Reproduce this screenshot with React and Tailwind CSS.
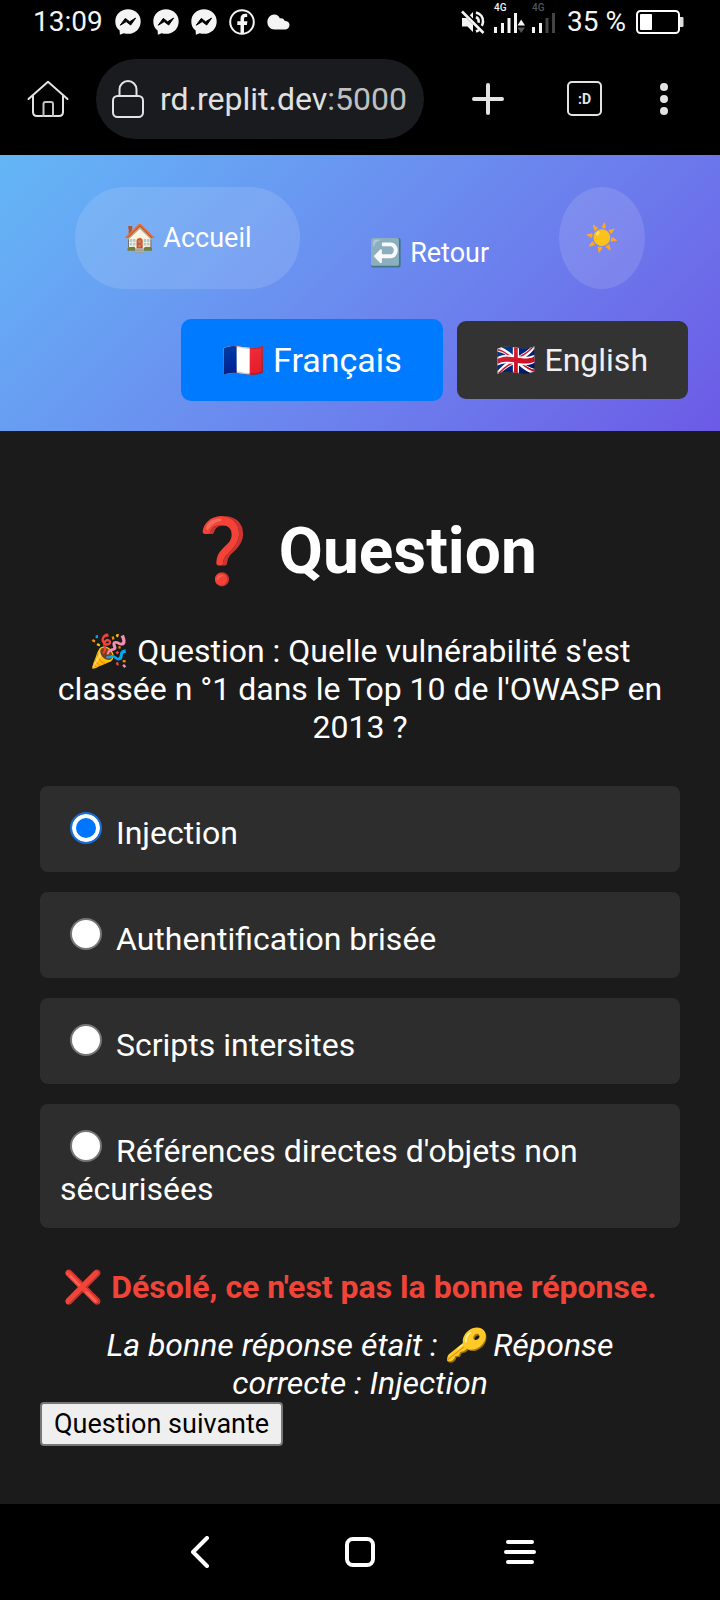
import { useState } from "react";

function MessengerIcon() {
  return (
    <svg className="size-[26px]" viewBox="0 0 26 26" aria-hidden="true">
      <path d="M13 0.2C5.8 0.2 0.3 5.4 0.3 12.4c0 3.8 1.5 6.900 4.300 9.200l0.300 4.200 3.800-1.600c1.300 0.400 2.800 0.600 4.300 0.600 7.200 0 12.700-5.200 12.700-12.400S20.200 0.200 13 0.200z" fill="#f4f4f4" />
      <path d="M5.300 16.200l5-6.800 4.300 3.400 6-3.700-4.900 6.900-4.500-3.400z" fill="#000" stroke="#000" strokeWidth="1" strokeLinejoin="round" />
    </svg>
  );
}

function FacebookIcon() {
  return (
    <svg className="size-[26px]" viewBox="0 0 26 26" fill="none" aria-hidden="true">
      <circle cx="13" cy="13" r="11.800" stroke="#f4f4f4" strokeWidth="2" />
      <path d="M11.500 24.500v-8.500H8.300v-3.700h3.200V9.800c0-3.200 1.900-5 4.800-5 1 0 1.900 0.200 1.900 0.200v3.100h-1.500c-1.400 0-1.700 0.900-1.700 1.800v2.400h3.400l-0.500 3.700H15v8.500z" fill="#f4f4f4" />
    </svg>
  );
}

function CloudIcon() {
  return (
    <svg className="h-4 w-[23px]" viewBox="0 0 23 16" aria-hidden="true">
      <path d="M7 0.500C9.500 0.300 11.800 1.700 13 4.400c2.300-0.300 3.800 0.500 4.600 2.400C20.700 6.900 22.500 8.700 22.500 11c0 2.700-1.900 4.500-4.700 4.500H7.500C3.300 15.500 0.400 12.300 0.400 8.300 0.400 4 2.900 0.800 7 0.500z" fill="#f4f4f4" />
    </svg>
  );
}

function MuteIcon() {
  return (
    <svg className="size-6" viewBox="0 0 24 24" fill="none" aria-hidden="true">
      <path d="M1 8h4.500L12 14.500V22l-5.500-5.500H1z" fill="#f4f4f4" />
      <path d="M12 2v6.500L8.800 5.200z" fill="#f4f4f4" />
      <path d="M15 7c2 1 3 3 2.600 5.800M15 2.400c4.800 1.300 7.300 5.300 7 9.300-0.100 1.700-0.500 3-1.200 4.200M15 21.500l3-1.400" stroke="#f4f4f4" strokeWidth="2.600" />
      <path d="M1 1.500l21.500 21.500" stroke="#f4f4f4" strokeWidth="2.600" />
    </svg>
  );
}

function Signal({ arrows }) {
  const faint = arrows ? "#f4f4f4" : "#444";
  return (
    <div className="flex flex-col">
      <span className={`h-[10px] text-[10px] leading-[10px] font-medium ${arrows ? "text-[#f4f4f4]" : "text-[#555]"}`}>4G</span>
      <svg className="h-5 w-[31px]" viewBox="0 0 31 20" aria-hidden="true">
        <path d="M0 14h3v6H0zM7 10h3v10H7z" fill="#f4f4f4" />
        <path d="M13.500 5h3v15h-3zM20 0h3v20H20z" fill={faint} />
        {arrows && <path d="M23.500 12.500h7.500L27.200 6.500z" fill="#f4f4f4" />}
        {arrows && <path d="M23.500 14.500h7.500L27.200 20z" fill="#555" />}
      </svg>
    </div>
  );
}

function BatteryIcon() {
  return (
    <svg className="h-6 w-12" viewBox="0 0 48 24" fill="none" aria-hidden="true">
      <rect x="1" y="1" width="42" height="22" rx="3.500" stroke="#fff" strokeWidth="2" />
      <rect x="4" y="4" width="12" height="16" rx="1" fill="#fff" />
      <path d="M44 7h2.500q1 0 1 1v8q0 1-1 1H44z" fill="#ddd" />
    </svg>
  );
}

function StatusBar() {
  return (
    <div className="flex h-11 items-center justify-between pr-9 pl-[33px] text-[28px] leading-8 text-[#f4f4f4]">
      <div className="flex items-center gap-3">
        <span>13:09</span>
        <MessengerIcon />
        <MessengerIcon />
        <MessengerIcon />
        <FacebookIcon />
        <CloudIcon />
      </div>
      <div className="flex items-center">
        <MuteIcon />
        <div className="flex gap-[7px] pr-1 pb-2 pl-[9px]">
          <Signal arrows />
          <Signal />
        </div>
        <span className="pr-[10px]">35 %</span>
        <BatteryIcon />
      </div>
    </div>
  );
}

function BrowserBar() {
  return (
    <div className="flex h-[111px] items-center pr-[52px] pb-0.5 pl-[27px]">
      <button type="button" aria-label="Home">
        <svg className="h-[38px] w-[42px]" viewBox="0 0 42 38" fill="none" stroke="#e3e3e3" strokeWidth="2" strokeLinejoin="round" strokeLinecap="round" aria-hidden="true">
          <path d="M1.500 19L21 1.800 40.500 19M6 15.500V32q0 4 4 4h22q4 0 4-4V15.500" />
          <path d="M16.500 36V24q0-2 2-2H24q2 0 2 2v12" stroke="#c4c4c4" />
        </svg>
      </button>
      <button type="button" aria-label="Address" className="ml-[27px] flex h-20 flex-1 items-center rounded-full bg-[#1a1b1f] pl-4 text-[32px] leading-10 text-[#e1e1e1]">
        <svg className="mr-4 h-[38px] w-8" viewBox="0 0 32 38" fill="none" stroke="#e3e3e3" strokeWidth="2" aria-hidden="true">
          <rect x="1" y="16" width="30" height="21" rx="4.500" />
          <path d="M7.500 16v-6.500a8.500 8.500 0 0 1 17 0V16" />
        </svg>
        <span>rd.replit.dev</span>
        <span className="text-[#c0c0c0]">:5000</span>
      </button>
      <button type="button" aria-label="New tab" className="ml-12">
        <svg className="size-8" viewBox="0 0 32 32" stroke="#e3e3e3" strokeWidth="4" strokeLinecap="round" aria-hidden="true">
          <path d="M16 2v28M2 16h28" />
        </svg>
      </button>
      <button type="button" aria-label="Tabs" className="ml-[63px] flex size-[35px] items-center justify-center rounded-[5px] border-2 border-[#e3e3e3] text-[14px] leading-5 font-bold text-[#e3e3e3]">
        :D
      </button>
      <button type="button" aria-label="Menu" className="ml-[58px]">
        <svg className="h-8 w-2" viewBox="0 0 8 32" fill="#e3e3e3" aria-hidden="true">
          <circle cx="4" cy="4" r="4" />
          <circle cx="4" cy="16" r="4" />
          <circle cx="4" cy="28" r="4" />
        </svg>
      </button>
    </div>
  );
}

function SiteHeader() {
  return (
    <header className="flex flex-col gap-[30px] bg-linear-135 from-[#63b6f6] to-[#6c5ae6] px-8 pt-8 pb-[30px] text-white">
      <nav className="flex items-center justify-between px-[43px] text-[27px] leading-[30px]">
        <a href="#accueil" className="rounded-[50px] bg-white/12 px-12 py-9">🏠 Accueil</a>
        <a href="#retour" className="pt-[30px]">↩️ Retour</a>
        <button type="button" aria-label="Theme" className="rounded-[50%] bg-white/12 px-[26px] py-9">☀️</button>
      </nav>
      <div className="flex items-center justify-end gap-[14px]">
        <button type="button" className="rounded-[10px] bg-[#007bff] px-[41px] py-[21px] text-[34px] leading-10">🇫🇷 Français</button>
        <button type="button" className="rounded-[9px] bg-[#333] px-10 py-5 text-[32px] leading-[38px] text-[#f0f0f0]">🇬🇧 English</button>
      </div>
    </header>
  );
}

const answers = [
  "Injection",
  "Authentification brisée",
  "Scripts intersites",
  "Références directes d'objets non sécurisées",
];

function Quiz() {
  const [choice, setChoice] = useState(0);
  return (
    <main className="flex-1 bg-[#1b1b1b] px-10 pt-[83px] pb-[57px] text-[32px] leading-[38px] text-white">
      <h1 className="text-center text-[64px] leading-[76px] font-bold">❓ Question</h1>
      <p className="mt-[42px] text-center">🎉 Question : Quelle vulnérabilité s'est classée n °1 dans le Top 10 de l'OWASP en 2013 ?</p>
      <div className="mt-10 flex flex-col gap-5">
        {answers.map((answer, i) => (
          <label key={answer} className="block rounded-[8px] bg-[#2d2d2d] p-5">
            <input
              type="radio"
              name="answer"
              checked={choice === i}
              onChange={() => setChoice(i)}
              className="mt-1.5 mr-1.5 ml-2.5 size-8 appearance-none rounded-full border-2 border-[#767676] bg-white align-baseline checked:border-[#1a6fd6] checked:bg-[#0075ff] checked:shadow-[inset_0_0_0_4px_#fff]"
            />{" "}
            {answer}
          </label>
        ))}
      </div>
      <p className="mt-10 text-center font-bold text-[#f04438]">❌ Désolé, ce n'est pas la bonne réponse.</p>
      <p className="mt-5 px-8 text-center italic">La bonne réponse était : 🔑 Réponse correcte : Injection</p>
      <button type="button" className="block rounded-[4px] border-2 border-[#767676] bg-[#efefef] px-3 py-1 text-[27px] leading-8 text-black">Question suivante</button>
    </main>
  );
}

function SystemNav() {
  return (
    <nav className="flex h-24 items-center justify-between px-[184px]" aria-label="System">
      <button type="button" aria-label="Back" className="flex w-8 justify-center">
        <svg className="h-8 w-[18px]" viewBox="0 0 18 32" fill="none" stroke="#fff" strokeWidth="4" strokeLinecap="round" strokeLinejoin="round" aria-hidden="true">
          <path d="M16 2L2 16l14 14" />
        </svg>
      </button>
      <button type="button" aria-label="Home screen" className="flex w-8 justify-center">
        <svg className="size-[30px]" viewBox="0 0 30 30" fill="none" stroke="#fff" strokeWidth="4" aria-hidden="true">
          <rect x="2" y="2" width="26" height="26" rx="6" />
        </svg>
      </button>
      <button type="button" aria-label="Recent apps" className="flex w-8 justify-center">
        <svg className="h-6 w-8" viewBox="0 0 32 24" stroke="#fff" strokeWidth="4" strokeLinecap="round" aria-hidden="true">
          <path d="M4 2h24M2 12h28M4 22h24" />
        </svg>
      </button>
    </nav>
  );
}

export default function App() {
  return (
    <div className="flex min-h-screen flex-col bg-black font-[Roboto,'Noto_Color_Emoji',sans-serif]">
      <StatusBar />
      <BrowserBar />
      <SiteHeader />
      <Quiz />
      <SystemNav />
    </div>
  );
}
